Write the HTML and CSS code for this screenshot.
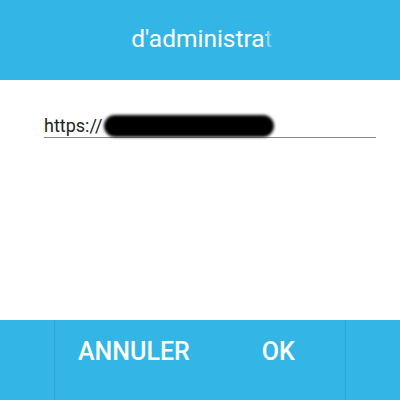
FILE: index.html
```html
<!DOCTYPE html>
<html>
<head>
<meta charset="utf-8">
<link rel="stylesheet" href="styles.css">
</head>
<body>
<div class="screen">
  <header class="title-bar">
    <div class="title">d'administra<span class="fade">t</span></div>
  </header>
  <main class="content">
    <div class="field">
      <span class="prefix">https://</span><span class="redacted"></span>
    </div>
  </main>
  <footer class="buttons">
    <div class="edge"></div>
    <div class="btn btn-cancel">ANNULER</div>
    <div class="btn btn-ok">OK</div>
    <div class="edge"></div>
  </footer>
</div>
</body>
</html>
```
FILE: styles.css
```css
html, body {
  margin: 0;
  padding: 0;
  background: #ffffff;
}
.screen {
  width: 400px;
  height: 400px;
  display: flex;
  flex-direction: column;
  font-family: Roboto, "Liberation Sans", sans-serif;
}
.title-bar {
  height: 80px;
  background: #33b5e5;
  display: flex;
  justify-content: center;
  box-sizing: border-box;
  padding: 25px 0 0 4px;
}
.title {
  color: #ffffff;
  font-size: 24.5px;
  line-height: 28px;
  height: 28px;
  white-space: nowrap;
}
.fade {
  background: linear-gradient(to right, rgba(255,255,255,0.75), rgba(255,255,255,0.1));
  -webkit-background-clip: text;
  background-clip: text;
  color: transparent;
}
.content {
  flex: 1;
  padding: 34px 24px 0 44px;
}
.field {
  display: flex;
  align-items: center;
  height: 23px;
  border-bottom: 1px solid #888888;
}
.prefix {
  font-size: 18px;
  color: #222222;
  line-height: 24px;
  padding-top: 1px;
}
.redacted {
  width: 170px;
  height: 22px;
  margin-left: 2px;
  margin-top: 1px;
  background: #000000;
  border-radius: 11px;
  filter: blur(1.5px);
}
.buttons {
  height: 80px;
  background: #33b5e5;
  display: flex;
}
.edge {
  width: 54px;
  border-right: 1px solid #2aa3cf;
}
.edge:last-child {
  border-right: none;
  border-left: 1px solid #2aa3cf;
}
.btn {
  flex: 1;
  color: #ffffff;
  font-weight: 500;
  font-size: 25px;
  line-height: 30px;
  padding-top: 17px;
  box-sizing: border-box;
}
.btn-cancel {
  padding-left: 23px;
}
.btn-ok {
  padding-left: 72px;
}
```
